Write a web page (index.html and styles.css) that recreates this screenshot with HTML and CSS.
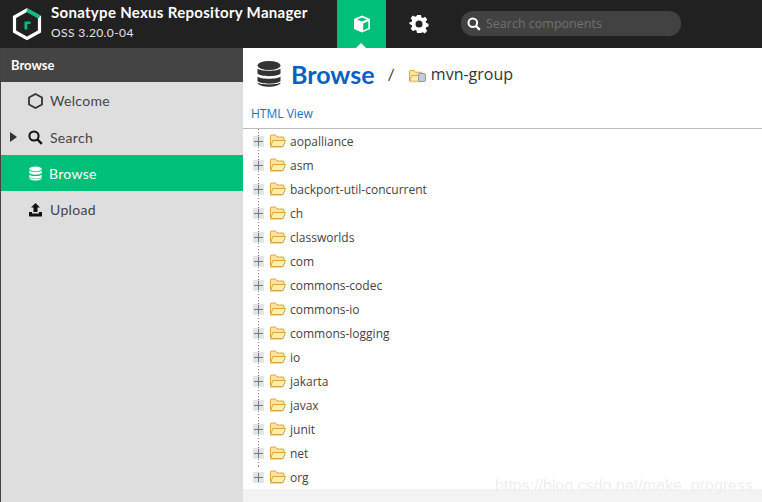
FILE: index.html
```html
<!DOCTYPE html>
<html lang="en">

<head>
    <meta charset="UTF-8">
    <title>Browse - Nexus Repository Manager</title>
    <link rel="stylesheet" href="styles.css">
</head>

<body>
    <svg class="defs" width="0" height="0">
        <symbol id="folder" viewBox="0 0 16 14">
            <path d="M.5 12.5V2q0-1 1-1h4l1.500 2h6q1 0 1 1v2" fill="#fbe59a" stroke="#d9a441"/>
            <path d="M.5 12.5 3 6.500h12.500l-2.500 6z" fill="#fff0b0" stroke="#d9a441" stroke-linejoin="round"/>
            <path d="M1 13.500h12" stroke="#e8dcc0"/>
        </symbol>
        <symbol id="stack" viewBox="0 0 24 26">
            <ellipse cx="12" cy="4.500" rx="11.500" ry="4.500"/>
            <path d="M.5 7.500C3 10.500 21 10.500 23.500 7.500V12.500C21 16 3 16 .5 12.500z"/>
            <path d="M.5 15C3 18 21 18 23.500 15V19.500C21 23 3 23 .5 19.500z" transform="translate(0 .5)"/>
            <path d="M.5 21.500C3 24 21 24 23.500 21.500V22C21 27 3 27 .5 22z"/>
        </symbol>
    </svg>

    <header class="topbar">
        <div class="brand">
            <svg class="logo" width="30" height="34" viewBox="0 0 30 34">
                <path d="M15 3 2.500 10v14.500L15 31.500l12.500-7V10z" fill="none" stroke="#fff" stroke-width="3.200"/>
                <path d="M15 3l12.500 7" fill="none" stroke="#00bf78" stroke-width="3.200"/>
                <path d="M12.500 22.500v-8h6v2.500h-3.200v5.500z" fill="#00bf78"/>
            </svg>
            <div>
                <div class="brand-name">Sonatype Nexus Repository Manager</div>
                <div class="brand-version">OSS 3.20.0-04</div>
            </div>
        </div>
        <div class="mode mode-active">
            <svg width="20" height="20" viewBox="0 0 20 20">
                <path d="M10 1.500 18 5v10l-8 3.500L2 15V5z" fill="#fff"/>
                <path d="M10 3.500 15 5.500 10 7.500 5 5.500z" fill="#00bf78"/>
                <path d="M11.200 9.500 16.300 7.300v6.800l-5.100 2.300z" fill="#00bf78"/>
            </svg>
        </div>
        <div class="mode">
            <svg width="20" height="20" viewBox="0 0 20 20">
                <path fill="#fff" fill-rule="evenodd" d="M8 1h4l.5 2.500 1.500.6 2.100-1.400 2.200 2.800-1.600 1.900.5 1.600 2.300.8v2.600l-2.300.9-.5 1.500 1.500 2-2.300 2.700-2-1.300-1.500.6L12 19H8l-.5-2.500-1.500-.6-2 1.300-2.300-2.700 1.500-2-.5-1.500-2.300-.9V8.500l2.300-.8.500-1.600L1.600 4.200l2.300-2.800L6 2.800l1.500-.6zM10 6.500a3.500 3.500 0 1 0 0 7 3.500 3.500 0 0 0 0-7z"/>
            </svg>
        </div>
        <div class="search">
            <svg width="14" height="14" viewBox="0 0 14 14">
                <circle cx="5.800" cy="5.800" r="4.300" fill="none" stroke="#fff" stroke-width="2"/>
                <path d="M9 9l3.800 3.800" stroke="#fff" stroke-width="2.400"/>
            </svg>
            <span>Search components</span>
        </div>
    </header>

    <div class="main">
        <nav class="sidebar">
            <div class="sidebar-title">Browse</div>
            <div class="nav-item nav-welcome">
                <svg width="15" height="16" viewBox="0 0 15 16"><path d="M7.500 1 14 4.500v7L7.500 15 1 11.500v-7z" fill="none" stroke="#333" stroke-width="1.800"/></svg>
                <span>Welcome</span>
            </div>
            <div class="nav-item nav-search">
                <span class="arrow"></span>
                <svg width="15" height="15" viewBox="0 0 15 15"><circle cx="6" cy="6" r="4.600" fill="none" stroke="#111" stroke-width="2"/><path d="M9.500 9.500l4.300 4.300" stroke="#111" stroke-width="2.400"/></svg>
                <span>Search</span>
            </div>
            <div class="nav-item nav-browse">
                <svg class="nav-stack" width="13" height="15"><use href="#stack"/></svg>
                <span>Browse</span>
            </div>
            <div class="nav-item nav-upload">
                <svg width="15" height="15" viewBox="0 0 15 15"><path d="M7.500 1 12 5.500H9.500V10h-4V5.500H3zM1 10h3v1.500h7V10h3v4.500H1z" fill="#111"/></svg>
                <span>Upload</span>
            </div>
        </nav>

        <section class="content">
            <div class="title-row">
                <svg class="title-icon" width="24" height="28"><use href="#stack"/></svg>
                <h1>Browse</h1>
                <span class="slash">/</span>
                <span class="repo-icon">
                    <svg width="15" height="14"><use href="#folder"/></svg>
                    <i class="repo-db"></i>
                </span>
                <span class="repo-name">mvn-group</span>
            </div>
            <div class="html-view"><a href="#">HTML View</a></div>
            <ul class="tree">
                <li><i class="plus"></i><svg width="16" height="14"><use href="#folder"/></svg><span>aopalliance</span></li>
                <li><i class="plus"></i><svg width="16" height="14"><use href="#folder"/></svg><span>asm</span></li>
                <li><i class="plus"></i><svg width="16" height="14"><use href="#folder"/></svg><span>backport-util-concurrent</span></li>
                <li><i class="plus"></i><svg width="16" height="14"><use href="#folder"/></svg><span>ch</span></li>
                <li><i class="plus"></i><svg width="16" height="14"><use href="#folder"/></svg><span>classworlds</span></li>
                <li><i class="plus"></i><svg width="16" height="14"><use href="#folder"/></svg><span>com</span></li>
                <li><i class="plus"></i><svg width="16" height="14"><use href="#folder"/></svg><span>commons-codec</span></li>
                <li><i class="plus"></i><svg width="16" height="14"><use href="#folder"/></svg><span>commons-io</span></li>
                <li><i class="plus"></i><svg width="16" height="14"><use href="#folder"/></svg><span>commons-logging</span></li>
                <li><i class="plus"></i><svg width="16" height="14"><use href="#folder"/></svg><span>io</span></li>
                <li><i class="plus"></i><svg width="16" height="14"><use href="#folder"/></svg><span>jakarta</span></li>
                <li><i class="plus"></i><svg width="16" height="14"><use href="#folder"/></svg><span>javax</span></li>
                <li><i class="plus"></i><svg width="16" height="14"><use href="#folder"/></svg><span>junit</span></li>
                <li><i class="plus"></i><svg width="16" height="14"><use href="#folder"/></svg><span>net</span></li>
                <li class="last"><i class="plus"></i><svg width="16" height="14"><use href="#folder"/></svg><span>org</span></li>
            </ul>
            <div class="content-foot"></div>
            <div class="watermark">https://blog.csdn.net/make_progress</div>
        </section>
    </div>
</body>

</html>
```

FILE: styles.css
```css
html, body {
    margin: 0;
    height: 100%;
    overflow: hidden;
}

body {
    font-family: "Lato", "Open Sans", sans-serif;
    background-color: white;
}

.defs {
    display: block;
    height: 0;
}

.topbar {
    display: flex;
    height: 48px;
    background-color: #212121;
}

.brand {
    display: flex;
    align-items: center;
    width: 337px;
    padding-left: 12px;
    box-sizing: border-box;
    color: white;
}

.logo {
    margin-right: 9px;
}

.brand-name {
    font-size: 15px;
    font-weight: 700;
    letter-spacing: .3px;
    line-height: 20px;
    margin-top: -6px;
}

.brand-version {
    font-size: 12px;
    line-height: 16px;
    margin-top: 3px;
    letter-spacing: .4px;
    color: #e4e4e4;
}

.mode {
    display: flex;
    align-items: center;
    justify-content: center;
    width: 49px;
    height: 48px;
    margin-right: 8px;
}

.mode-active {
    position: relative;
    background-color: #00bf78;
}

.mode-active::after {
    content: "";
    position: absolute;
    left: 19px;
    bottom: 0;
    border-left: 5px solid transparent;
    border-right: 5px solid transparent;
    border-bottom: 5px solid white;
}

.search {
    display: flex;
    align-items: center;
    gap: 5px;
    width: 220px;
    height: 25px;
    margin: 11px 0 0 10px;
    padding-left: 6px;
    box-sizing: border-box;
    border-radius: 12px;
    background-color: #424242;
    font-family: "Open Sans", sans-serif;
    font-size: 12.5px;
    color: #717171;
}

.main {
    display: flex;
    height: 454px;
}

.sidebar {
    width: 243px;
    flex-shrink: 0;
    border-left: 1px solid #4a3f3f;
    box-sizing: border-box;
    background-color: #dedede;
}

.sidebar-title {
    height: 34px;
    line-height: 34px;
    padding-left: 10px;
    background-color: #444;
    color: white;
    font-size: 13px;
    font-weight: 700;
}

.nav-item {
    display: flex;
    align-items: center;
    gap: 7px;
    height: 36px;
    padding-left: 27px;
    font-size: 14px;
    letter-spacing: .3px;
    color: #444;
}

.nav-welcome {
    height: 37px;
}

.nav-search {
    position: relative;
    height: 36px;
}

.arrow {
    position: absolute;
    left: 9px;
    top: 13px;
    border-top: 5px solid transparent;
    border-bottom: 5px solid transparent;
    border-left: 7px solid #333;
}

.nav-browse {
    background-color: #00bf78;
    color: white;
}

.nav-stack {
    fill: white;
    margin-left: 1px;
}

.content {
    position: relative;
    flex: 1;
    display: flex;
    flex-direction: column;
}

.title-row {
    display: flex;
    align-items: center;
    height: 52px;
    padding-left: 14px;
    box-sizing: border-box;
}

.title-icon {
    fill: #333;
}

h1 {
    margin: 0 0 0 10px;
    font-size: 25px;
    font-weight: 700;
    color: #0a5fc4;
}

.slash {
    margin: -2px 14px 0 13px;
    font-size: 16px;
    color: #333;
}

.repo-icon {
    position: relative;
    display: block;
    width: 17px;
    height: 15px;
    margin-right: 5px;
}

.repo-db {
    position: absolute;
    right: 0;
    bottom: 0;
    width: 8px;
    height: 9px;
    border-radius: 2px;
    border: 1px solid #8d9aa5;
    box-sizing: border-box;
    background-color: #c3ced6;
}

.repo-name {
    font-family: "Open Sans", sans-serif;
    font-size: 16px;
    color: #333;
}

.html-view {
    height: 29px;
    line-height: 28px;
    padding-left: 8px;
    box-sizing: border-box;
    border-bottom: 1px solid #bbb;
    font-family: "Open Sans", sans-serif;
    font-size: 12px;
}

.html-view a {
    color: #1b6fc2;
    text-decoration: none;
}

.tree {
    list-style: none;
    margin: 0;
    padding: 0;
    font-family: "Open Sans", sans-serif;
    font-size: 12px;
    color: #444;
}

.tree li {
    display: flex;
    align-items: center;
    height: 24px;
    padding-left: 10px;
    background-image: linear-gradient(#888 50%, transparent 50%);
    background-size: 1px 3px;
    background-repeat: repeat-y;
    background-position: 15px 0;
}

.tree li.last {
    background-size: 1px 3px;
    background-repeat: no-repeat;
}

.plus {
    position: relative;
    display: block;
    width: 11px;
    height: 11px;
    margin-right: 6px;
    background-color: #e2e4e6;
    background-image: linear-gradient(#777, #777), linear-gradient(#777, #777);
    background-size: 9px 1px, 1px 9px;
    background-position: center;
    background-repeat: no-repeat;
}

.tree svg {
    margin-right: 4px;
}

.content-foot {
    flex: 1;
    background-color: #f3f3f3;
}

.watermark {
    position: absolute;
    right: 9px;
    bottom: 7px;
    font-family: "Liberation Sans", sans-serif;
    font-size: 16px;
    color: #eee;
    filter: blur(.4px);
}
```
